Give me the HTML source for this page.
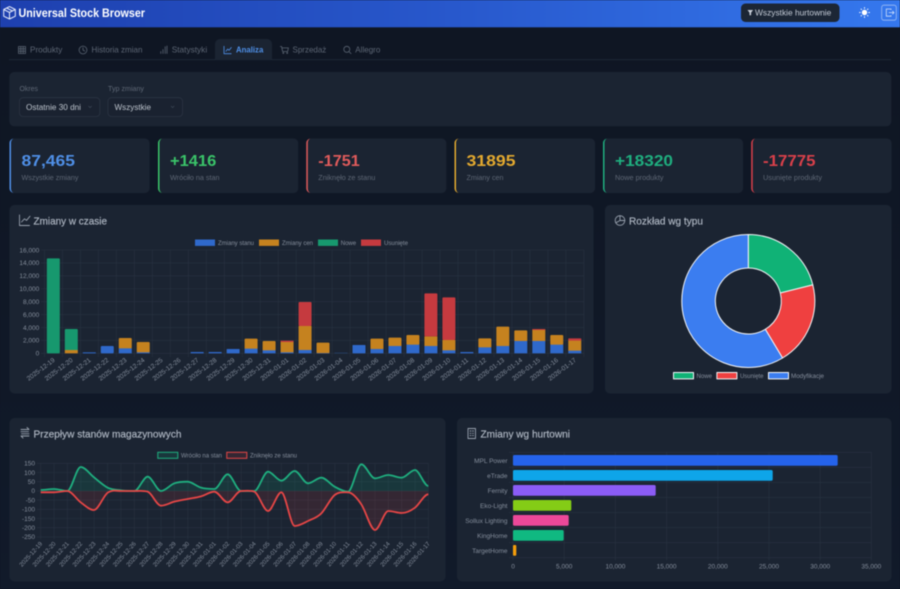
<!DOCTYPE html>
<html lang="pl"><head><meta charset="utf-8"><title>Universal Stock Browser</title>
<style>
html,body{margin:0;padding:0;width:900px;height:589px;overflow:hidden;background:#0f1724}
svg{display:block;position:absolute;left:0;top:0;filter:blur(.45px)}
text{font-family:"Liberation Sans",sans-serif}
.tab{font-size:8.3px;fill:#5d6674}
.lab{font-size:7.3px;fill:#5e6775}
.val{font-size:15.8px;font-weight:bold}
.ttl{font-size:10.5px;fill:#aeb6c2;stroke:#aeb6c2;stroke-width:.18}
.ax{font-size:6.5px;fill:#858e9c}
.ax2{font-size:6.1px;fill:#858e9c}
.ye{text-anchor:end}
.mid{text-anchor:middle}
.card{fill:#1b2432}
.g{stroke:#283241;stroke-width:.6;fill:none}
.ic{fill:none;stroke:#5a6472;stroke-width:.8;stroke-linecap:round;stroke-linejoin:round}
.it{fill:none;stroke:#98a1ae;stroke-width:.9;stroke-linecap:round;stroke-linejoin:round}
</style></head><body>
<svg width="900" height="589" viewBox="0 0 900 589" xmlns="http://www.w3.org/2000/svg">
<defs>
<linearGradient id="hd" x1="0" x2="1" y1="0" y2="0"><stop offset="0" stop-color="#1e40af"/><stop offset=".5" stop-color="#2858cc"/><stop offset="1" stop-color="#3578ee"/></linearGradient>
<linearGradient id="bg" x1="0" x2="0" y1="0" y2="1"><stop offset="0" stop-color="#0f1623"/><stop offset="1" stop-color="#111a2a"/></linearGradient>
</defs>
<rect width="900" height="589" fill="url(#bg)"/>
<!-- header -->
<rect width="900" height="27.3" fill="url(#hd)"/>
<g fill="none" stroke="#e8eefc" stroke-width="1" stroke-linejoin="round"><path d="M9.5 6.6 15.3 9.5V16.2L9.5 19 3.7 16.2V9.5Z"/><path d="M3.7 9.5 9.5 12.4 15.3 9.5M9.5 12.4V19M6.6 8 12.4 10.9"/></g>
<text x="18.5" y="17" font-size="11.5" font-weight="bold" fill="#fff" textLength="126.5" lengthAdjust="spacingAndGlyphs">Universal Stock Browser</text>
<rect x="741" y="3.5" width="98.5" height="18.5" rx="4.5" fill="#1c2635"/>
<path d="M747.5 10h5.6l-2 2.6v2.6h-1.6v-2.6z" fill="#c8ced8"/>
<text x="755" y="15.7" font-size="8.2" fill="#c3cad5" textLength="76.3" lengthAdjust="spacingAndGlyphs">Wszystkie hurtownie</text>
<circle cx="864.5" cy="12.5" r="2.7" fill="#fff"/>
<path d="M864.5 7.2v1.4M864.5 16.4v1.4M859.2 12.5h1.4M868.4 12.5h1.4M860.8 8.8l1 1M867.2 15.2l1 1M860.8 16.2l1-1M867.2 9.8l1-1" stroke="#fff" stroke-width="1" fill="none"/>
<rect x="881.7" y="5.2" width="14.6" height="15" rx="2.2" fill="none" stroke="#9dbdf5" stroke-width=".8"/>
<path d="M891 10V9H886.3V16.2H891V15.2M888.8 12.6H894M892.4 11 894 12.6 892.4 14.2" fill="none" stroke="#cfe0fb" stroke-width=".8"/>
<!-- tabs -->
<path d="M9 59.7H891" stroke="#1f2938" stroke-width=".8"/>
<path d="M215 59.7V44a5 5 0 0 1 5-5H267a5 5 0 0 1 5 5V59.7Z" fill="#1b2432"/>
<path class="ic" d="M18.5 46.5h7v7h-7zM18.5 48.8h7M18.5 51.2h7M20.8 46.5v7M23.2 46.5v7"/>
<text class="tab" x="30" y="52.7" textLength="32.3" lengthAdjust="spacingAndGlyphs">Produkty</text>
<circle class="ic" cx="83" cy="50" r="3.9"/><path class="ic" d="M83 47.7V50l1.6 1"/>
<text class="tab" x="91.5" y="52.7" textLength="51" lengthAdjust="spacingAndGlyphs">Historia zmian</text>
<path class="ic" d="M160.8 53.5v-2M163 53.5v-4M165.2 53.5v-6.8M167 53.5v-7.5"/>
<text class="tab" x="171.7" y="52.7" textLength="35.5" lengthAdjust="spacingAndGlyphs">Statystyki</text>
<path d="M224 46v7.7h7.5M225.7 51.5l2-2.4 1.4 1.2 2.4-3" fill="none" stroke="#4f90e8" stroke-width=".8" stroke-linejoin="round"/>
<text x="236" y="52.7" font-size="8.3" font-weight="bold" fill="#4f90e8" textLength="27.3" lengthAdjust="spacingAndGlyphs">Analiza</text>
<path class="ic" d="M280.3 46.5h1.3l1 5h5l.8-3.6h-6.3"/><circle class="ic" cx="283.3" cy="53" r=".5"/><circle class="ic" cx="287.2" cy="53" r=".5"/>
<text class="tab" x="292.5" y="52.7" textLength="33.8" lengthAdjust="spacingAndGlyphs">Sprzedaż</text>
<circle class="ic" cx="346.8" cy="49.3" r="3"/><path class="ic" d="M349 51.6 351 53.6"/>
<text class="tab" x="355.3" y="52.7" textLength="25" lengthAdjust="spacingAndGlyphs">Allegro</text>
<!-- filters -->
<rect class="card" x="9.3" y="72" width="882" height="54.3" rx="5"/>
<text class="lab" x="19.5" y="91" textLength="18.5" lengthAdjust="spacingAndGlyphs">Okres</text>
<text class="lab" x="108" y="91" textLength="36" lengthAdjust="spacingAndGlyphs">Typ zmiany</text>
<rect x="19.5" y="97.7" width="80.3" height="18.8" rx="3.5" fill="#1a2230" stroke="#2b3443" stroke-width=".8"/>
<rect x="108" y="97.7" width="74.5" height="18.8" rx="3.5" fill="#1a2230" stroke="#2b3443" stroke-width=".8"/>
<text x="26" y="110" font-size="8.3" fill="#bcc3cc" textLength="55" lengthAdjust="spacingAndGlyphs">Ostatnie 30 dni</text>
<text x="114.5" y="110" font-size="8.3" fill="#bcc3cc" textLength="36.5" lengthAdjust="spacingAndGlyphs">Wszystkie</text>
<path d="M88.5 106l1.6 1.6 1.6-1.6M171 106l1.6 1.6 1.6-1.6" fill="none" stroke="#3d4756" stroke-width=".7"/>
<!-- stat cards -->
<g>
<path class="card" d="M14 138.5H145a4.5 4.5 0 0 1 4.5 4.5V188.5a4.5 4.5 0 0 1-4.5 4.5H14a4.5 4.5 0 0 1-4.5-4.5V143a4.5 4.5 0 0 1 4.5-4.5Z"/>
<path d="M14 138.5a4.5 4.5 0 0 0-4.5 4.5V188.5a4.5 4.5 0 0 0 4.5 4.5a3 4.5 0 0 1-3-4.5V143a3 4.5 0 0 1 3-4.5Z" fill="#4f8fe6"/>
<text class="val" x="21.5" y="166" fill="#4f8fe6" textLength="53.5" lengthAdjust="spacingAndGlyphs">87,465</text>
<text class="lab" x="21.5" y="180" textLength="57" lengthAdjust="spacingAndGlyphs">Wszystkie zmiany</text>

<path class="card" d="M162.5 138.5H293.7a4.5 4.5 0 0 1 4.5 4.5V188.5a4.5 4.5 0 0 1-4.5 4.5H162.5a4.5 4.5 0 0 1-4.5-4.5V143a4.5 4.5 0 0 1 4.5-4.5Z"/>
<path d="M162.5 138.5a4.5 4.5 0 0 0-4.5 4.5V188.5a4.5 4.5 0 0 0 4.5 4.5a3 4.5 0 0 1-3-4.5V143a3 4.5 0 0 1 3-4.5Z" fill="#3ac469"/>
<text class="val" x="170" y="166" fill="#3ac469" textLength="46.3" lengthAdjust="spacingAndGlyphs">+1416</text>
<text class="lab" x="170" y="180" textLength="49.5" lengthAdjust="spacingAndGlyphs">Wróciło na stan</text>

<path class="card" d="M310.8 138.5H441.8a4.5 4.5 0 0 1 4.5 4.5V188.5a4.5 4.5 0 0 1-4.5 4.5H310.8a4.5 4.5 0 0 1-4.5-4.5V143a4.5 4.5 0 0 1 4.5-4.5Z"/>
<path d="M310.8 138.5a4.5 4.5 0 0 0-4.5 4.5V188.5a4.5 4.5 0 0 0 4.5 4.5a3 4.5 0 0 1-3-4.5V143a3 4.5 0 0 1 3-4.5Z" fill="#e05b5b"/>
<text class="val" x="318.3" y="166" fill="#e05b5b" textLength="41.5" lengthAdjust="spacingAndGlyphs">-1751</text>
<text class="lab" x="318.3" y="180" textLength="57" lengthAdjust="spacingAndGlyphs">Zniknęło ze stanu</text>

<path class="card" d="M459 138.5H590.5a4.5 4.5 0 0 1 4.5 4.5V188.5a4.5 4.5 0 0 1-4.5 4.5H459a4.5 4.5 0 0 1-4.5-4.5V143a4.5 4.5 0 0 1 4.5-4.5Z"/>
<path d="M459 138.5a4.5 4.5 0 0 0-4.5 4.5V188.5a4.5 4.5 0 0 0 4.5 4.5a3 4.5 0 0 1-3-4.5V143a3 4.5 0 0 1 3-4.5Z" fill="#e3a92f"/>
<text class="val" x="466.5" y="166" fill="#e3a92f" textLength="49" lengthAdjust="spacingAndGlyphs">31895</text>
<text class="lab" x="466.5" y="180" textLength="37" lengthAdjust="spacingAndGlyphs">Zmiany cen</text>

<path class="card" d="M607.5 138.5H738.5a4.5 4.5 0 0 1 4.5 4.5V188.5a4.5 4.5 0 0 1-4.5 4.5H607.5a4.5 4.5 0 0 1-4.5-4.5V143a4.5 4.5 0 0 1 4.5-4.5Z"/>
<path d="M607.5 138.5a4.5 4.5 0 0 0-4.5 4.5V188.5a4.5 4.5 0 0 0 4.5 4.5a3 4.5 0 0 1-3-4.5V143a3 4.5 0 0 1 3-4.5Z" fill="#1fae7f"/>
<text class="val" x="615" y="166" fill="#1fae7f" textLength="58" lengthAdjust="spacingAndGlyphs">+18320</text>
<text class="lab" x="615" y="180" textLength="48.5" lengthAdjust="spacingAndGlyphs">Nowe produkty</text>

<path class="card" d="M755.7 138.5H887a4.5 4.5 0 0 1 4.5 4.5V188.5a4.5 4.5 0 0 1-4.5 4.5H755.7a4.5 4.5 0 0 1-4.5-4.5V143a4.5 4.5 0 0 1 4.5-4.5Z"/>
<path d="M755.7 138.5a4.5 4.5 0 0 0-4.5 4.5V188.5a4.5 4.5 0 0 0 4.5 4.5a3 4.5 0 0 1-3-4.5V143a3 4.5 0 0 1 3-4.5Z" fill="#d9404a"/>
<text class="val" x="763" y="166" fill="#d9404a" textLength="52.5" lengthAdjust="spacingAndGlyphs">-17775</text>
<text class="lab" x="763" y="180" textLength="59" lengthAdjust="spacingAndGlyphs">Usunięte produkty</text>
</g>
<!-- chart cards -->
<rect class="card" x="9.5" y="205" width="584" height="188.5" rx="5"/>
<rect class="card" x="605" y="205" width="286.5" height="188.5" rx="5"/>
<rect class="card" x="9.5" y="418" width="436" height="163.5" rx="5"/>
<rect class="card" x="457" y="418" width="434.5" height="163.5" rx="5"/>
<!-- titles -->
<path class="it" d="M19.5 215v10.5h10M21.5 222l3-3.2 2 1.6 3.5-4.2"/>
<text class="ttl" x="33.5" y="224.5" textLength="73.5" lengthAdjust="spacingAndGlyphs">Zmiany w czasie</text>
<circle class="it" cx="620" cy="220.5" r="4.8"/><path class="it" d="M620 215.7V220.5L615.8 222.8M620 220.5H624.8"/>
<text class="ttl" x="629" y="224.5" textLength="74" lengthAdjust="spacingAndGlyphs">Rozkład wg typu</text>
<path class="it" d="M21 429.5h8l-2-2M29 436h-8l2 2M21 431.7h7.5M29 433.8h-7.5"/>
<text class="ttl" x="33.5" y="437.3" textLength="148" lengthAdjust="spacingAndGlyphs">Przepływ stanów magazynowych</text>
<path class="it" d="M468 428.5h7.5v10h-7.5zM470 431h1M472.5 431h1M470 433.3h1M472.5 433.3h1M470 435.6h1M472.5 435.6h1"/>
<text class="ttl" x="480.5" y="437.3" textLength="89.5" lengthAdjust="spacingAndGlyphs">Zmiany wg hurtowni</text>
<!-- main chart -->
<path class="g" d="M44.5 250v107m17.98-107v107m17.98-107v107m17.98-107v107m17.98-107v107m17.98-107v107m17.98-107v107m17.98-107v107m17.98-107v107m17.98-107v107m17.98-107v107m17.98-107v107m17.98-107v107m17.98-107v107m17.98-107v107m17.98-107v107m17.98-107v107m17.98-107v107m17.98-107v107m17.98-107v107m17.98-107v107m17.98-107v107m17.98-107v107m17.98-107v107m17.98-107v107m17.98-107v107m17.98-107v107m17.98-107v107m17.98-107v107m17.98-107v107m17.98-107v107"/>
<path class="g" d="M41 250h543m-543 12.92h543m-543 12.92h543m-543 12.92h543m-543 12.92h543m-543 12.92h543m-543 12.92h543m-543 12.92h543m-543 12.92h543"/>
<g>
<text class="ax ye" x="39.3" y="252.3">16,000</text><text class="ax ye" x="39.3" y="265.2">14,000</text><text class="ax ye" x="39.3" y="278.1">12,000</text><text class="ax ye" x="39.3" y="291.1">10,000</text><text class="ax ye" x="39.3" y="304">8,000</text><text class="ax ye" x="39.3" y="316.9">6,000</text><text class="ax ye" x="39.3" y="329.8">4,000</text><text class="ax ye" x="39.3" y="342.7">2,000</text><text class="ax ye" x="39.3" y="355.7">0</text>
</g>
<g transform="translate(0 205) scale(.33333)">
<g fill="#17986e">
<rect x="140.5" y="160" width="39" height="285" rx="3"/>
<rect x="194.4" y="372" width="39" height="66" rx="3"/>
</g>
<g fill="#c5821f">
<rect x="194.4" y="435" width="39" height="10"/>
<rect x="356.3" y="399" width="39" height="33" rx="3"/>
<rect x="410.2" y="411" width="39" height="32" rx="3"/>
<rect x="733.8" y="401" width="39" height="32" rx="3"/>
<rect x="787.8" y="408" width="39" height="30" rx="3"/>
<rect x="841.7" y="409" width="39" height="34"/>
<rect x="895.7" y="363" width="39" height="73"/>
<rect x="949.6" y="413" width="39" height="32" rx="3"/>
<rect x="1111.4" y="401" width="39" height="32" rx="3"/>
<rect x="1165.4" y="398" width="39" height="27" rx="3"/>
<rect x="1219.3" y="390" width="39" height="30" rx="3"/>
<rect x="1273.2" y="394" width="39" height="30"/>
<rect x="1327.2" y="405" width="39" height="32"/>
<rect x="1435.1" y="400" width="39" height="28" rx="3"/>
<rect x="1489" y="365" width="39" height="59" rx="3"/>
<rect x="1542.9" y="376" width="39" height="33" rx="3"/>
<rect x="1596.9" y="374" width="39" height="35"/>
<rect x="1650.8" y="390" width="39" height="30" rx="3"/>
<rect x="1704.8" y="406" width="39" height="32"/>
</g>
<g fill="#c53a3f">
<rect x="841.7" y="407" width="39" height="4"/>
<rect x="895.7" y="291" width="39" height="72" rx="3"/>
<rect x="1273.2" y="265" width="39" height="129" rx="3"/>
<rect x="1327.2" y="277" width="39" height="128" rx="3"/>
<rect x="1596.9" y="372" width="39" height="3"/>
<rect x="1704.8" y="400" width="39" height="7" rx="2"/>
</g>
<g fill="#2f69cb">
<rect x="248.4" y="442" width="39" height="3"/>
<rect x="302.3" y="423" width="39" height="22" rx="3"/>
<rect x="356.3" y="430" width="39" height="15"/>
<rect x="410.2" y="442" width="39" height="3"/>
<rect x="572" y="441" width="39" height="4"/>
<rect x="626" y="441" width="39" height="4"/>
<rect x="679.9" y="432" width="39" height="13" rx="2"/>
<rect x="733.8" y="431" width="39" height="14"/>
<rect x="787.8" y="436" width="39" height="9"/>
<rect x="841.7" y="442" width="39" height="3"/>
<rect x="895.7" y="435" width="39" height="10"/>
<rect x="949.6" y="444" width="39" height="1"/>
<rect x="1003.5" y="443" width="39" height="2" opacity=".4"/>
<rect x="1057.5" y="420" width="39" height="25" rx="2"/>
<rect x="1111.4" y="432" width="39" height="13"/>
<rect x="1165.4" y="423" width="39" height="22"/>
<rect x="1219.3" y="419" width="39" height="26"/>
<rect x="1273.2" y="423" width="39" height="22"/>
<rect x="1327.2" y="436" width="39" height="9"/>
<rect x="1381.1" y="441" width="39" height="4"/>
<rect x="1435.1" y="427" width="39" height="18"/>
<rect x="1489" y="423" width="39" height="22"/>
<rect x="1542.9" y="408" width="39" height="37"/>
<rect x="1596.9" y="408" width="39" height="37"/>
<rect x="1650.8" y="419" width="39" height="26"/>
<rect x="1704.8" y="437" width="39" height="8"/>
</g>
</g>
<rect x="195" y="239.5" width="20" height="6.4" fill="#2f69cb"/><text class="ax" x="218" y="244.8" textLength="36" lengthAdjust="spacingAndGlyphs">Zmiany stanu</text>
<rect x="259" y="239.5" width="20" height="6.4" fill="#c5821f"/><text class="ax" x="282" y="244.8" textLength="31" lengthAdjust="spacingAndGlyphs">Zmiany cen</text>
<rect x="318" y="239.5" width="20" height="6.4" fill="#17986e"/><text class="ax" x="340.7" y="244.8" textLength="15.5" lengthAdjust="spacingAndGlyphs">Nowe</text>
<rect x="361" y="239.5" width="20" height="6.4" fill="#c53a3f"/><text class="ax" x="384" y="244.8" textLength="24" lengthAdjust="spacingAndGlyphs">Usunięte</text>
<g>
<text class="ax ye" transform="translate(55.3 361) rotate(-37)">2025-12-19</text>
<text class="ax ye" transform="translate(73.3 361) rotate(-37)">2025-12-20</text>
<text class="ax ye" transform="translate(91.3 361) rotate(-37)">2025-12-21</text>
<text class="ax ye" transform="translate(109.2 361) rotate(-37)">2025-12-22</text>
<text class="ax ye" transform="translate(127.2 361) rotate(-37)">2025-12-23</text>
<text class="ax ye" transform="translate(145.2 361) rotate(-37)">2025-12-24</text>
<text class="ax ye" transform="translate(163.2 361) rotate(-37)">2025-12-25</text>
<text class="ax ye" transform="translate(181.2 361) rotate(-37)">2025-12-26</text>
<text class="ax ye" transform="translate(199.1 361) rotate(-37)">2025-12-27</text>
<text class="ax ye" transform="translate(217.1 361) rotate(-37)">2025-12-28</text>
<text class="ax ye" transform="translate(235.1 361) rotate(-37)">2025-12-29</text>
<text class="ax ye" transform="translate(253.1 361) rotate(-37)">2025-12-30</text>
<text class="ax ye" transform="translate(271.1 361) rotate(-37)">2025-12-31</text>
<text class="ax ye" transform="translate(289 361) rotate(-37)">2026-01-01</text>
<text class="ax ye" transform="translate(307 361) rotate(-37)">2026-01-02</text>
<text class="ax ye" transform="translate(325 361) rotate(-37)">2026-01-03</text>
<text class="ax ye" transform="translate(343 361) rotate(-37)">2026-01-04</text>
<text class="ax ye" transform="translate(360.9 361) rotate(-37)">2026-01-05</text>
<text class="ax ye" transform="translate(378.9 361) rotate(-37)">2026-01-06</text>
<text class="ax ye" transform="translate(396.9 361) rotate(-37)">2026-01-07</text>
<text class="ax ye" transform="translate(414.9 361) rotate(-37)">2026-01-08</text>
<text class="ax ye" transform="translate(432.9 361) rotate(-37)">2026-01-09</text>
<text class="ax ye" transform="translate(450.9 361) rotate(-37)">2026-01-10</text>
<text class="ax ye" transform="translate(468.8 361) rotate(-37)">2026-01-11</text>
<text class="ax ye" transform="translate(486.8 361) rotate(-37)">2026-01-12</text>
<text class="ax ye" transform="translate(504.8 361) rotate(-37)">2026-01-13</text>
<text class="ax ye" transform="translate(522.8 361) rotate(-37)">2026-01-14</text>
<text class="ax ye" transform="translate(540.7 361) rotate(-37)">2026-01-15</text>
<text class="ax ye" transform="translate(558.7 361) rotate(-37)">2026-01-16</text>
<text class="ax ye" transform="translate(576.7 361) rotate(-37)">2026-01-17</text>
</g>
<!-- donut -->
<g stroke="#f2f4f7" stroke-width="1" stroke-linejoin="round">
<path fill="#10b276" d="M748.3 234.5A66.5 66.5 0 0 1 812.8 284.9L780.3 293A33 33 0 0 0 748.3 268Z"/>
<path fill="#ef4040" d="M812.8 284.9A66.5 66.5 0 0 1 782.55 358L765.3 329.3A33 33 0 0 0 780.3 293Z"/>
<path fill="#3b7df0" d="M782.55 358A66.5 66.5 0 1 1 748.3 234.5L748.3 268A33 33 0 1 0 765.3 329.3Z"/>
<rect x="673.5" y="372.5" width="20" height="6.4" fill="#10b276"/>
<rect x="716.9" y="372.5" width="20" height="6.4" fill="#ef4040"/>
<rect x="768.5" y="372.5" width="20" height="6.4" fill="#3b7df0"/>
</g>
<text class="ax" x="696.5" y="378" textLength="15.5" lengthAdjust="spacingAndGlyphs">Nowe</text>
<text class="ax" x="740" y="378" textLength="23.5" lengthAdjust="spacingAndGlyphs">Usunięte</text>
<text class="ax" x="791" y="378" textLength="33" lengthAdjust="spacingAndGlyphs">Modyfikacje</text>
<!-- flow chart -->
<path class="g" d="M40.7 463.3v76m13.37-76v76m13.37-76v76m13.37-76v76m13.37-76v76m13.37-76v76m13.37-76v76m13.37-76v76m13.37-76v76m13.37-76v76m13.37-76v76m13.37-76v76m13.37-76v76m13.37-76v76m13.37-76v76m13.37-76v76m13.37-76v76m13.37-76v76m13.37-76v76m13.37-76v76m13.37-76v76m13.37-76v76m13.37-76v76m13.37-76v76m13.37-76v76m13.37-76v76m13.37-76v76m13.37-76v76m13.37-76v76m13.37-76v76"/>
<path class="g" d="M37 463.3h391.3m-391.3 9.2h391.3m-391.3 9.2h391.3m-391.3 9.2h391.3m-391.3 9.2h391.3m-391.3 9.2h391.3m-391.3 9.2h391.3m-391.3 9.2h391.3m-391.3 9.2h391.3"/>
<text class="ax ye" x="35" y="465.6">150</text><text class="ax ye" x="35" y="474.8">100</text><text class="ax ye" x="35" y="484">50</text><text class="ax ye" x="35" y="493.2">0</text><text class="ax ye" x="35" y="502.4">-50</text><text class="ax ye" x="35" y="511.6">-100</text><text class="ax ye" x="35" y="520.8">-150</text><text class="ax ye" x="35" y="530">-200</text><text class="ax ye" x="35" y="539.2">-250</text>
<g transform="translate(0 415) scale(.33333)">
<path fill="#10b981" fill-opacity=".13" d="M122 225C135 225 149 222 162 222S189 228 202 228S229 156 242 156S269 176.5 282 187S310 211.4 323 218S350 224.3 363 226S390 228 403 228S430 185 443 185S470 228 483 228S510 209.8 523 205S550 200 563 200S590 214.3 603 218S630 222 643 222S670 178 683 178S710 228 723 228S750 228 763 228S791 170 804 170S831 197 844 197S871 168 884 168S911 205 924 205S951 188 964 188S991 207.9 1004 215S1031 230 1044 230S1071 148 1084 148S1112 190 1125 190S1152 180 1165 180S1192 188 1205 188S1232 165 1245 165S1272 213 1285 213L1285 228L122 228Z"/>
<path fill="#ef4444" fill-opacity=".12" d="M122 232C135 232 149 232 162 232S189 228 202 228S229 252.3 242 262S269 285 282 285S310 242.7 323 233S350 228 363 228S390 228 403 228S430 226 443 230S470 272 483 272S510 263.4 523 260S550 254.7 563 252S590 247.7 603 244S630 230 643 230S670 262 683 262S710 228 723 228S750 225 763 230S791 288 804 288S831 232 844 232S871 333 884 333S911 324.5 924 318S951 308.3 964 295S991 250.7 1004 240S1031 232 1044 232S1071 248.8 1084 268S1112 345 1125 345S1152 288 1165 288S1192 294 1205 294S1232 287.5 1245 278S1272 238 1285 238L1285 228L122 228Z"/>
<path fill="none" stroke="#1fae7f" stroke-width="5.4" stroke-linejoin="round" d="M122 225C135 225 149 222 162 222S189 228 202 228S229 156 242 156S269 176.5 282 187S310 211.4 323 218S350 224.3 363 226S390 228 403 228S430 185 443 185S470 228 483 228S510 209.8 523 205S550 200 563 200S590 214.3 603 218S630 222 643 222S670 178 683 178S710 228 723 228S750 228 763 228S791 170 804 170S831 197 844 197S871 168 884 168S911 205 924 205S951 188 964 188S991 207.9 1004 215S1031 230 1044 230S1071 148 1084 148S1112 190 1125 190S1152 180 1165 180S1192 188 1205 188S1232 165 1245 165S1272 213 1285 213"/>
<path fill="none" stroke="#e54646" stroke-width="5.4" stroke-linejoin="round" d="M122 232C135 232 149 232 162 232S189 228 202 228S229 252.3 242 262S269 285 282 285S310 242.7 323 233S350 228 363 228S390 228 403 228S430 226 443 230S470 272 483 272S510 263.4 523 260S550 254.7 563 252S590 247.7 603 244S630 230 643 230S670 262 683 262S710 228 723 228S750 225 763 230S791 288 804 288S831 232 844 232S871 333 884 333S911 324.5 924 318S951 308.3 964 295S991 250.7 1004 240S1031 232 1044 232S1071 248.8 1084 268S1112 345 1125 345S1152 288 1165 288S1192 294 1205 294S1232 287.5 1245 278S1272 238 1285 238"/>
</g>
<rect x="157.8" y="452.3" width="20" height="6" fill="#10b981" fill-opacity=".13" stroke="#1fae7f" stroke-width="1"/>
<text class="ax" x="181" y="457.6" textLength="41" lengthAdjust="spacingAndGlyphs">Wróciło na stan</text>
<rect x="226.8" y="452.3" width="20" height="6" fill="#ef4444" fill-opacity=".12" stroke="#e54646" stroke-width="1"/>
<text class="ax" x="250" y="457.6" textLength="47" lengthAdjust="spacingAndGlyphs">Zniknęło ze stanu</text>
<g>
<text class="ax2 ye" transform="translate(42.7 544) rotate(-48)">2025-12-19</text>
<text class="ax2 ye" transform="translate(56 544) rotate(-48)">2025-12-20</text>
<text class="ax2 ye" transform="translate(69.3 544) rotate(-48)">2025-12-21</text>
<text class="ax2 ye" transform="translate(82.7 544) rotate(-48)">2025-12-22</text>
<text class="ax2 ye" transform="translate(96 544) rotate(-48)">2025-12-23</text>
<text class="ax2 ye" transform="translate(109.7 544) rotate(-48)">2025-12-24</text>
<text class="ax2 ye" transform="translate(123 544) rotate(-48)">2025-12-25</text>
<text class="ax2 ye" transform="translate(136.3 544) rotate(-48)">2025-12-26</text>
<text class="ax2 ye" transform="translate(149.7 544) rotate(-48)">2025-12-27</text>
<text class="ax2 ye" transform="translate(163 544) rotate(-48)">2025-12-28</text>
<text class="ax2 ye" transform="translate(176.3 544) rotate(-48)">2025-12-29</text>
<text class="ax2 ye" transform="translate(189.7 544) rotate(-48)">2025-12-30</text>
<text class="ax2 ye" transform="translate(203 544) rotate(-48)">2025-12-31</text>
<text class="ax2 ye" transform="translate(216.3 544) rotate(-48)">2026-01-01</text>
<text class="ax2 ye" transform="translate(229.7 544) rotate(-48)">2026-01-02</text>
<text class="ax2 ye" transform="translate(243 544) rotate(-48)">2026-01-03</text>
<text class="ax2 ye" transform="translate(256.3 544) rotate(-48)">2026-01-04</text>
<text class="ax2 ye" transform="translate(270 544) rotate(-48)">2026-01-05</text>
<text class="ax2 ye" transform="translate(283.3 544) rotate(-48)">2026-01-06</text>
<text class="ax2 ye" transform="translate(296.7 544) rotate(-48)">2026-01-07</text>
<text class="ax2 ye" transform="translate(310 544) rotate(-48)">2026-01-08</text>
<text class="ax2 ye" transform="translate(323.3 544) rotate(-48)">2026-01-09</text>
<text class="ax2 ye" transform="translate(336.7 544) rotate(-48)">2026-01-10</text>
<text class="ax2 ye" transform="translate(350 544) rotate(-48)">2026-01-11</text>
<text class="ax2 ye" transform="translate(363.3 544) rotate(-48)">2026-01-12</text>
<text class="ax2 ye" transform="translate(377 544) rotate(-48)">2026-01-13</text>
<text class="ax2 ye" transform="translate(390.3 544) rotate(-48)">2026-01-14</text>
<text class="ax2 ye" transform="translate(403.7 544) rotate(-48)">2026-01-15</text>
<text class="ax2 ye" transform="translate(417 544) rotate(-48)">2026-01-16</text>
<text class="ax2 ye" transform="translate(430.3 544) rotate(-48)">2026-01-17</text>
</g>
<!-- wholesalers -->
<path class="g" d="M513 452.3v108m51.2-108v108m51.2-108v108m51.2-108v108m51.2-108v108m51.2-108v108m51.2-108v108m51.2-108v108"/>
<path class="g" d="M509 452.3h362.3m-362.3 15.06h362.3m-362.3 15.06h362.3m-362.3 15.06h362.3m-362.3 15.06h362.3m-362.3 15.06h362.3m-362.3 15.06h362.3m-362.3 15.06h362.3"/>
<rect x="513" y="455" width="324.7" height="10.7" rx="1.5" fill="#2563eb"/>
<rect x="513" y="470" width="259.7" height="10.7" rx="1.5" fill="#0ea5e9"/>
<rect x="513" y="485" width="142.7" height="10.7" rx="1.5" fill="#8b5cf6"/>
<rect x="513" y="500" width="58.3" height="10.7" rx="1.5" fill="#84cc16"/>
<rect x="513" y="515" width="55.7" height="10.7" rx="1.5" fill="#ec4899"/>
<rect x="513" y="530" width="50.7" height="10.7" rx="1.5" fill="#10b981"/>
<rect x="513" y="545" width="3.3" height="10.7" rx="1" fill="#f59e0b"/>
<text class="ax ye" x="507.5" y="462.8">MPL Power</text>
<text class="ax ye" x="507.5" y="477.8">eTrade</text>
<text class="ax ye" x="507.5" y="492.8">Fernity</text>
<text class="ax ye" x="507.5" y="507.8">Eko-Light</text>
<text class="ax ye" x="507.5" y="522.8">Sollux Lighting</text>
<text class="ax ye" x="507.5" y="537.8">KingHome</text>
<text class="ax ye" x="507.5" y="552.8">TargetHome</text>
<text class="ax mid" x="513" y="568.7">0</text>
<text class="ax mid" x="564.2" y="568.7">5,000</text>
<text class="ax mid" x="615.4" y="568.7">10,000</text>
<text class="ax mid" x="666.6" y="568.7">15,000</text>
<text class="ax mid" x="717.8" y="568.7">20,000</text>
<text class="ax mid" x="769" y="568.7">25,000</text>
<text class="ax mid" x="820.2" y="568.7">30,000</text>
<text class="ax mid" x="871.3" y="568.7">35,000</text>
</svg>
</body></html>
